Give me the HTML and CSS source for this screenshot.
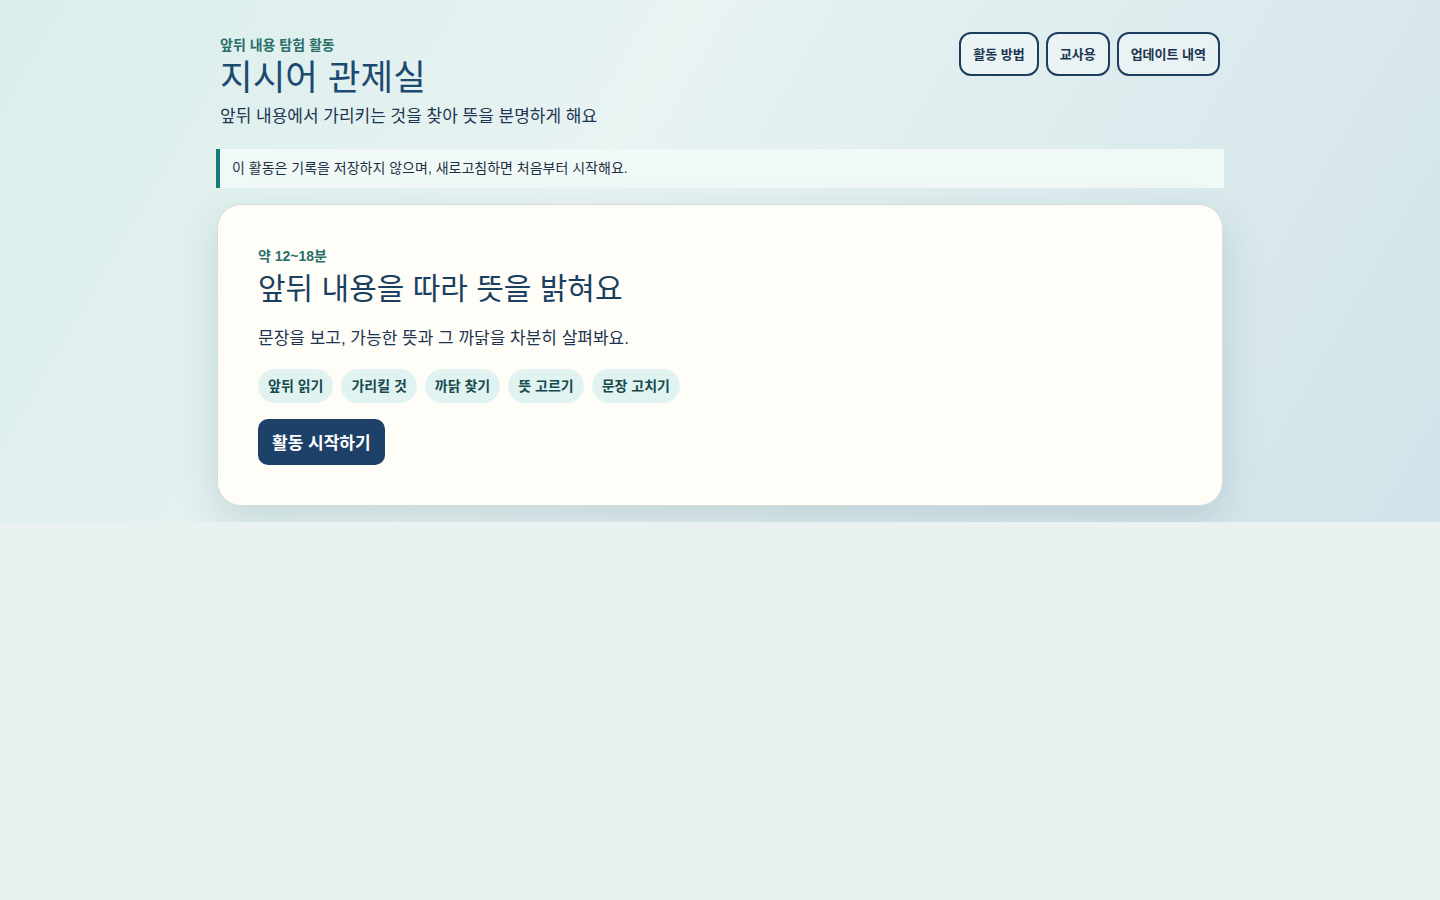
FILE: index.html
```html
<!DOCTYPE html>
<html lang="ko">
<head>
  <meta charset="UTF-8">
  <meta name="viewport" content="width=device-width, initial-scale=1.0">
  <title>지시어 관제실</title>
  <link rel="stylesheet" href="styles.css">
</head>
<body>

  <div class="page">
    <!-- 상단 제목 + 메뉴 -->
    <header class="top">
      <div class="title-block">
        <p class="eyebrow">앞뒤 내용 탐험 활동</p>
        <h1>지시어 관제실</h1>
        <p class="lead">앞뒤 내용에서 가리키는 것을 찾아 뜻을 분명하게 해요</p>
      </div>
      <nav class="top-menu">
        <button class="ghost-btn">활동 방법</button>
        <button class="ghost-btn">교사용</button>
        <button class="ghost-btn">업데이트 내역</button>
      </nav>
    </header>

    <div class="notice">이 활동은 기록을 저장하지 않으며, 새로고침하면 처음부터 시작해요.</div>

    <!-- 시작 카드 -->
    <section class="intro-card">
      <p class="time">약 12~18분</p>
      <h2>앞뒤 내용을 따라 뜻을 밝혀요</h2>
      <p class="desc">문장을 보고, 가능한 뜻과 그 까닭을 차분히 살펴봐요.</p>
      <ul class="chips">
        <li>앞뒤 읽기</li>
        <li>가리킬 것</li>
        <li>까닭 찾기</li>
        <li>뜻 고르기</li>
        <li>문장 고치기</li>
      </ul>
      <button class="start-btn">활동 시작하기</button>
    </section>
  </div>

</body>
</html>
```

FILE: styles.css
```css
html {
  background: #e9f2f0;
}

body {
  margin: 0;
  padding: 32px 0 16px;
  font-family: "Liberation Sans", "Noto Sans CJK KR", sans-serif;
  color: #1d3550;
  background: linear-gradient(120deg, #d9eeeb 0%, #e8f3f2 40%, #d1e3e9 100%);
}

.page {
  width: 1008px;
  margin: 0 auto;
}

.top {
  display: flex;
  justify-content: space-between;
  align-items: flex-start;
  padding: 0 4px;
}

.eyebrow {
  margin: 3px 0 0;
  font-size: 14px;
  font-weight: 700;
  color: #2b6f6c;
  line-height: 20px;
}

h1 {
  margin: 0;
  font-size: 35.5px;
  font-weight: 400;
  line-height: 46px;
  color: #1d4a70;
}

.lead {
  margin: 4px 0 0;
  font-size: 17px;
  line-height: 24px;
  color: #1d3550;
}

.top-menu {
  display: flex;
  gap: 7px;
}

.ghost-btn {
  height: 44px;
  padding: 0 12px 2px;
  font-family: inherit;
  font-size: 13px;
  font-weight: 700;
  color: #1d3550;
  background: rgba(255, 255, 255, 0.35);
  border: 2px solid #1d3d60;
  border-radius: 12px;
  cursor: pointer;
}

.notice {
  margin-top: 20px;
  padding: 8px 12px;
  font-size: 14px;
  line-height: 23px;
  color: #1f3040;
  background: #f0f9f8;
  border-left: 4px solid #1a7a78;
}

.intro-card {
  margin: 16px 1px 0;
  padding: 40px;
  background: #fefdf7;
  border: 1px solid #d3dfdc;
  border-radius: 24px;
  box-shadow: 0 16px 40px rgba(40, 80, 100, 0.16);
}

.time {
  margin: 0;
  font-size: 14px;
  font-weight: 700;
  line-height: 22px;
  color: #2b6f6c;
}

h2 {
  margin: 0;
  font-size: 30px;
  font-weight: 400;
  line-height: 44px;
  color: #1b3f5e;
}

.desc {
  margin: 16px 0 0;
  font-size: 17px;
  line-height: 24px;
  color: #1d3550;
}

.chips {
  display: flex;
  gap: 8px;
  margin: 18px 0 0;
  padding: 0;
  list-style: none;
}

.chips li {
  height: 34px;
  padding: 0 10px;
  font-size: 14px;
  font-weight: 700;
  line-height: 34px;
  color: #174a4d;
  background: #e1f3f1;
  border-radius: 17px;
}

.start-btn {
  margin-top: 16px;
  height: 46px;
  padding: 0 14px 2px;
  font-family: inherit;
  font-size: 17px;
  font-weight: 700;
  color: #fff;
  background: #1d4168;
  border: none;
  border-radius: 10px;
  cursor: pointer;
}
```
